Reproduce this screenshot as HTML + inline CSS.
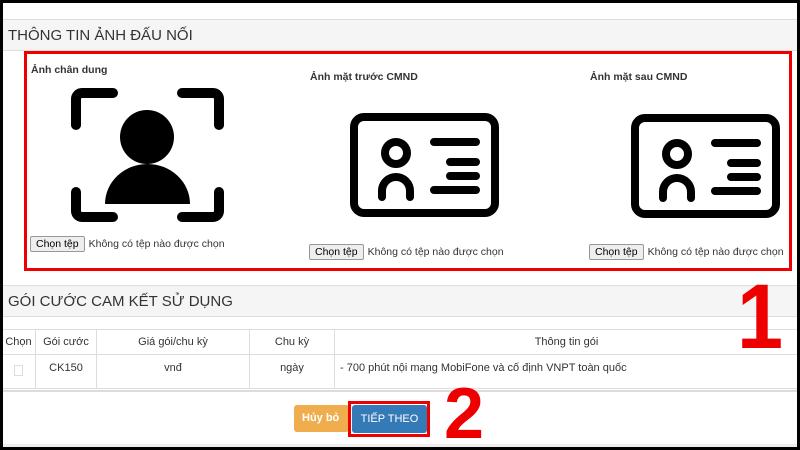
<!DOCTYPE html>
<html style="overflow:hidden"><head><meta charset="utf-8"><style>
*{margin:0;padding:0;box-sizing:border-box}
html,body{width:800px;height:450px;overflow:hidden}
body{background:#000;position:relative;font-family:"Liberation Sans",Arial,sans-serif;color:#333}
.pg{position:absolute;left:3px;top:3px;width:794px;height:444px;background:#fff;overflow:hidden}
.a{position:absolute}
.hd{position:absolute;left:0;width:794px;background:#f5f5f5;border-top:1px solid #ddd;border-bottom:1px solid #ddd;font-size:15px;color:#333;padding-left:5px}
.lbl{font-size:10.5px;font-weight:bold;color:#333}
.fb{font-size:10.5px;color:#333;white-space:nowrap}
.fb span{display:inline-block;border:1px solid #999;background:#eee;padding:1px 5px;margin-right:4px;border-radius:2px;color:#000}
table{border-collapse:collapse;font-size:11px}
td,th{border:1px solid #ddd;text-align:center;font-weight:normal;height:25px}
th{font-weight:normal}
</style></head><body><div class="pg">
<div class="a" style="left:0;top:0;width:794px;height:16px;background:#fff"></div>
<div class="hd" style="top:16px;height:32px;line-height:31px">THÔNG TIN ẢNH ĐẤU NỐI</div>
<div class="a" style="left:21px;top:48px;width:768px;height:220px;border:3px solid #e00"></div>
<div class="a lbl" style="left:28px;top:61px">Ảnh chân dung</div>
<div class="a lbl" style="left:307px;top:68px">Ảnh mặt trước CMND</div>
<div class="a lbl" style="left:587px;top:68px">Ảnh mặt sau CMND</div>
<svg class="a" style="left:0;top:0" width="794" height="444" viewBox="3 3 794 444">
<g fill="none" stroke="#000" stroke-width="10" stroke-linecap="round" stroke-linejoin="round">
<path d="M76 125V99a6 6 0 0 1 6-6h31"/><path d="M182 93h31a6 6 0 0 1 6 6v26"/>
<path d="M76 192v19a6 6 0 0 0 6 6h31"/><path d="M182 217h31a6 6 0 0 0 6-6v-19"/>
</g>
<g fill="none" stroke="#000" stroke-width="8" stroke-linecap="round" stroke-linejoin="round">
<g id="c"><rect x="354" y="117" width="141" height="96" rx="10"/>
<circle cx="396" cy="153" r="11"/><path d="M382 197v-6a14 14 0 0 1 28 0v6"/>
<path d="M434 142h42M450 162h26M450 176h26M434 190h42"/></g>
<use href="#c" x="281" y="1"/>
</g>
<circle cx="147" cy="137" r="27"/><path d="M105 204a42.5 40 0 0 1 85 0z"/>
</svg>
<div class="a fb" style="left:27px;top:233px"><span>Chọn tệp</span>Không có tệp nào được chọn</div>
<div class="a fb" style="left:306px;top:241px"><span>Chọn tệp</span>Không có tệp nào được chọn</div>
<div class="a fb" style="left:586px;top:241px"><span>Chọn tệp</span>Không có tệp nào được chọn</div>
<div class="hd" style="top:282px;height:32px;line-height:31px">GÓI CƯỚC CAM KẾT SỬ DỤNG</div>
<table class="a" style="left:-2px;top:326px;width:798px">
<tr><th style="width:34px">Chọn</th><th style="width:61px">Gói cước</th><th style="width:153px">Giá gói/chu kỳ</th><th style="width:85px">Chu kỳ</th><th>Thông tin gói</th></tr>
<tr style="height:34px"><td><span style="display:inline-block;width:9px;height:11px;border:1px solid #ddd"></span></td><td style="vertical-align:top;padding-top:7px">CK150</td><td style="vertical-align:top;padding-top:7px">vnđ</td><td style="vertical-align:top;padding-top:7px">ngày</td><td style="text-align:left;padding-left:5px;vertical-align:top;padding-top:7px">- 700 phút nội mạng MobiFone và cố định VNPT toàn quốc</td></tr>
</table>
<div class="a" style="left:0;top:387px;width:794px;height:2px;background:#ddd"></div>
<div class="a" style="left:291px;top:402px;width:55px;height:27px;background:#f0ad4e;border-radius:3px;color:#fff;font-size:11px;line-height:27px;padding-left:8px;font-weight:bold">Hủy bỏ</div>
<div class="a" style="left:345px;top:398px;width:82px;height:36px;border:3px solid #e00"></div>
<div class="a" style="left:349px;top:402px;width:75px;height:28px;background:#337ab7;border-radius:3px;color:#fff;font-size:11px;line-height:28px;text-align:center">TIẾP THEO</div>
<div class="a" style="left:441px;top:375px;font-size:72px;font-weight:bold;color:#e00;line-height:72px">2</div>
<div class="a" style="left:734px;top:268px;font-size:92px;font-weight:bold;color:#e00;line-height:92px;transform:scaleX(0.9);transform-origin:left">1</div>
<div class="a" style="left:0;top:441px;width:794px;height:3px;background:#eee"></div>
</div></body></html>
